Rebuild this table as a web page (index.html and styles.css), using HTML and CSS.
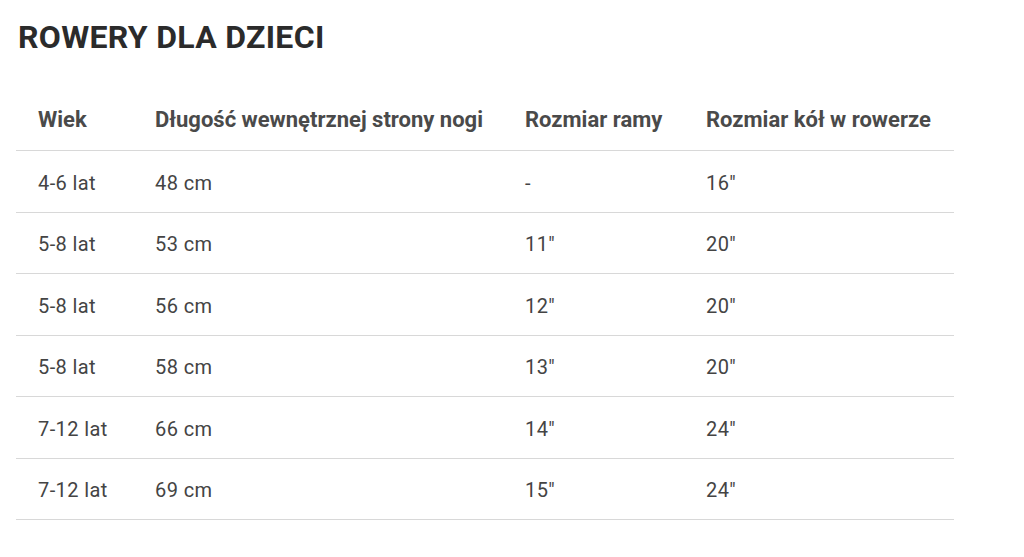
FILE: index.html
```html
<!DOCTYPE html>
<html lang="pl">
<head>
<meta charset="utf-8">
<title>Rowery dla dzieci</title>
<link rel="stylesheet" href="styles.css">
</head>
<body>
<main class="page">
  <h1 class="title">ROWERY DLA DZIECI</h1>
  <table class="sizes">
    <colgroup>
      <col class="c1"><col class="c2"><col class="c3"><col class="c4">
    </colgroup>
    <thead>
      <tr>
        <th>Wiek</th>
        <th>Długość wewnętrznej strony nogi</th>
        <th>Rozmiar ramy</th>
        <th>Rozmiar kół w rowerze</th>
      </tr>
    </thead>
    <tbody>
      <tr><td>4-6 lat</td><td>48 cm</td><td>-</td><td>16″</td></tr>
      <tr><td>5-8 lat</td><td>53 cm</td><td>11″</td><td>20″</td></tr>
      <tr><td>5-8 lat</td><td>56 cm</td><td>12″</td><td>20″</td></tr>
      <tr><td>5-8 lat</td><td>58 cm</td><td>13″</td><td>20″</td></tr>
      <tr><td>7-12 lat</td><td>66 cm</td><td>14″</td><td>24″</td></tr>
      <tr><td>7-12 lat</td><td>69 cm</td><td>15″</td><td>24″</td></tr>
    </tbody>
  </table>
</main>
</body>
</html>
```

FILE: styles.css
```css
html, body {
  margin: 0;
  padding: 0;
  background: #ffffff;
}
body {
  font-family: Roboto, "Liberation Sans", sans-serif;
  color: #444444;
}
.page {
  padding: 18px 0 0 16px;
}
.title {
  margin: 0 0 0 2px;
  font-size: 32px;
  line-height: 38px;
  font-weight: 700;
  letter-spacing: 0.3px;
  color: #2b2b2b;
}
.sizes {
  margin-top: 32px;
  width: 938px;
  border-collapse: collapse;
  table-layout: fixed;
}
.c1 { width: 117px; }
.c2 { width: 370px; }
.c3 { width: 181px; }
.c4 { width: 270px; }
.sizes th,
.sizes td {
  text-align: left;
  padding: 0 0 0 22px;
  white-space: nowrap;
}
.sizes th {
  font-size: 22px;
  line-height: 26px;
  font-weight: 700;
  color: #4a4a4a;
  padding-top: 19px;
  padding-bottom: 17px;
  border-bottom: 1px solid #d8d8d8;
}
.sizes td {
  font-size: 20px;
  line-height: 24px;
  letter-spacing: 0.4px;
  font-weight: 400;
  height: 61.5px;
  padding-top: 3px;
  border-bottom: 1px solid #d8d8d8;
  box-sizing: border-box;
}
```
